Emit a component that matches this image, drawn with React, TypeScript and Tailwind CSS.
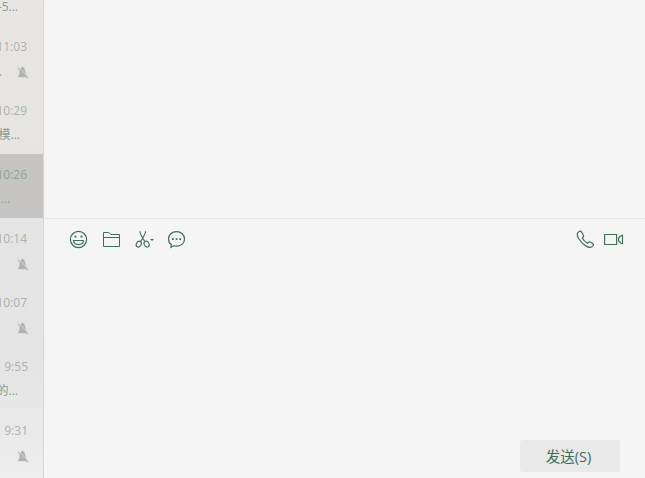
type Chat = { time: string; text?: string; muted?: boolean; active?: boolean; end?: string };

const chats: Chat[] = [
  { time: '', text: '-5...', end: 'pr-[25px]' },
  { time: '11:03', text: '.', muted: true },
  { time: '10:29', text: '模...', end: 'pr-[23px]' },
  { time: '10:26', text: '...', active: true, end: 'pr-[33px]' },
  { time: '10:14', muted: true },
  { time: '10:07', muted: true },
  { time: '9:55', text: '的...', end: 'pr-[25px]' },
  { time: '9:31', muted: true },
];

function MutedBell() {
  return (
    <svg className="ml-[15px] h-[13px] w-3 shrink-0" viewBox="0 0 12 13" fill="none">
      <path d="M4.6 1.2Q5.5 0 6.4 1.2C8 2.3 8.2 4.4 8.6 6.6L10.4 11.2H.8L2.4 7.4C2.8 5 3 2.3 4.6 1.2Z" fill="#b1b4b2" />
      <path d="M1.4 1.2 12 11.6" stroke="#e6e4e3" strokeWidth=".8" />
      <path d="M.8 1.8 11.3 12.3" stroke="#b1b4b2" strokeWidth="1.1" />
    </svg>
  );
}

function ChatRow({ chat }: { chat: Chat }) {
  return (
    <li className={`flex h-16 shrink-0 flex-col items-end ${chat.active ? 'bg-[#c6c5c4]' : ''}`}>
      <div className={`mt-3 h-[18px] text-[12px] leading-[18px] whitespace-nowrap ${chat.time.length > 4 ? 'pr-4' : 'pr-[15px]'} ${chat.active ? 'text-[#8fa097]' : 'text-[#adb1ae]'}`}>
        {chat.time}
      </div>
      <div className={`flex h-[18px] items-center text-[12px] leading-[18px] whitespace-nowrap text-[#8a9890] ${chat.muted ? 'mt-[7px] pr-[14px]' : 'mt-[6px]'} ${chat.end ?? ''}`}>
        <span>{chat.text}</span>
        {chat.muted && <MutedBell />}
      </div>
    </li>
  );
}

const line = { fill: 'none', stroke: '#3f6f57', strokeWidth: 1.2 } as const;

function Smile() {
  return (
    <svg className="h-5 w-5" viewBox="0 0 20 20" {...line}>
      <circle cx="10.5" cy="10.5" r="8.1" />
      <path d="M5.5 11.5h10c-.2 2.5-2.3 4.1-5 4.1s-4.8-1.6-5-4.1Z" />
      <circle cx="7.5" cy="7.6" r="1.1" fill="#3f6f57" stroke="none" />
      <circle cx="13.5" cy="7.6" r="1.1" fill="#3f6f57" stroke="none" />
    </svg>
  );
}

function Folder() {
  return (
    <svg className="h-5 w-5" viewBox="0 0 20 20" {...line} strokeWidth={1}>
      <path d="M2.5 17.5v-14h5.2l2.2 2h8.6v12ZM2.5 8.5h16" />
    </svg>
  );
}

function Scissors() {
  return (
    <svg className="h-5 w-5" viewBox="0 0 20 20" {...line} strokeWidth={1.1}>
      <path d="M5.8 2.2c.3 2.2 1.5 5 5 10.2M11.6 2.2c-.3 2.2-1.5 5-5 10.2" />
      <ellipse cx="4.8" cy="15.1" rx="2.4" ry="3" transform="rotate(30 4.8 15.1)" />
      <ellipse cx="12.6" cy="15.1" rx="2.4" ry="3" transform="rotate(-30 12.6 15.1)" />
      <path d="M16 9.9h4l-2 2.1Z" fill="#3f6f57" stroke="none" />
    </svg>
  );
}

function Bubble() {
  return (
    <svg className="h-5 w-5" viewBox="0 0 20 20" {...line}>
      <path d="M9.5 2.6C4.8 2.6 1.5 5.8 1.5 9.9c0 2.4 1 4.4 2.8 5.7l-.4 2.7 2.8-1.5c.9.3 1.8.4 2.8.4 4.7 0 8-3.2 8-7.3s-3.3-7.3-8-7.3Z" />
      <path d="M5 9.2h1.7v1.7H5zM8.7 9.2h1.7v1.7H8.7zM12.3 9.2H14v1.7h-1.7z" fill="#3f6f57" stroke="none" />
    </svg>
  );
}

function Phone() {
  return (
    <svg className="h-5 w-5" viewBox="0 0 20 20" {...line}>
      <path d="M3.2 2.5 1.9 3.6c-1 1-.7 3.5.9 6.2 1.9 3.2 4.9 6.1 8.3 7.8 1.8.9 3.5 1.1 4.5.3l1.4-1.3c.7-.7.6-1.4-.1-1.9l-2.6-1.6c-.7-.4-1.3-.3-1.8.1l-1.1 1c-2.2-1.1-4-2.9-5.1-5.1l.9-1.1c.5-.6.5-1.2.2-1.8L5.6 3c-.6-1-1.6-1.2-2.4-.5Z" />
    </svg>
  );
}

function Video() {
  return (
    <svg className="h-5 w-5" viewBox="0 0 20 20" {...line}>
      <path d="M.6 5.5h12v10H.6zM18.5 6.3v8.4l-2-.7-1.9-2V9l1.9-2Z" />
    </svg>
  );
}

export default function App() {
  return (
    <div className="flex h-screen w-full overflow-hidden bg-[#f5f5f5] font-['Open_Sans','Noto_Sans_CJK_SC',sans-serif]">
      <aside className="w-11 shrink-0 overflow-hidden border-r border-[#d5d5d5] bg-linear-to-b from-[#e8e6e4] via-[#e4e4e4] via-75% to-[#eeeeee]">
        <ul className="-mt-[38px] flex flex-col">
          {chats.map((chat, i) => (
            <ChatRow key={i} chat={chat} />
          ))}
        </ul>
      </aside>
      <main className="flex min-w-0 flex-1 flex-col">
        <section className="h-[218px] shrink-0" />
        <section className="flex flex-1 flex-col border-t border-[#e7e7e7]">
          <div className="flex h-10 items-center justify-between pr-[21px] pl-6">
            <div className="flex gap-[13px]">
              <Smile />
              <Folder />
              <Scissors />
              <Bubble />
            </div>
            <div className="flex gap-2">
              <Phone />
              <Video />
            </div>
          </div>
          <div className="flex-1" />
          <button className="mr-[25px] mb-[6px] h-8 w-[100px] self-end rounded-[3px] bg-[#e9e9e9] pt-0.5 pr-[3px] text-[14.5px] leading-[30px] text-[#3f6f57]">
            发送(S)
          </button>
        </section>
      </main>
    </div>
  );
}
